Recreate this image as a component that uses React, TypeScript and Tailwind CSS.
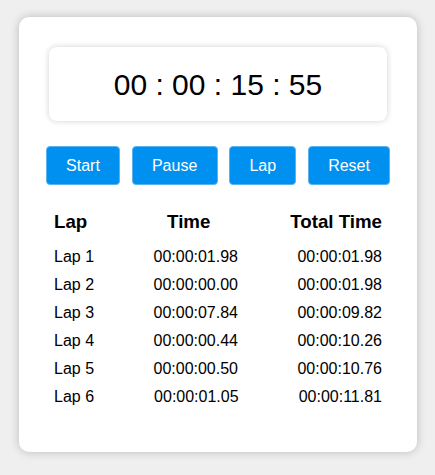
import React from "react";

const laps = [
  ["Lap 1", "00:00:01.98", "00:00:01.98"],
  ["Lap 2", "00:00:00.00", "00:00:01.98"],
  ["Lap 3", "00:00:07.84", "00:00:09.82"],
  ["Lap 4", "00:00:00.44", "00:00:10.26"],
  ["Lap 5", "00:00:00.50", "00:00:10.76"],
  ["Lap 6", "00:00:01.05", "00:00:11.81"],
];

export default function App() {
  return (
    <div
      className="min-h-[475px] w-[435px] bg-[#efefef] pt-[17px] pl-[19px] text-black"
      style={{ fontFamily: '"Liberation Sans", Arial, sans-serif' }}
    >
      <div className="flex h-[435px] w-[398px] flex-col rounded-[10px] bg-white px-[30px] pt-[30px] shadow-[0_0_10px_rgba(0,0,0,0.22)]">
        <div className="flex h-[74px] w-[338px] items-center justify-center rounded-[8px] bg-white text-[30px] shadow-[0_0_6px_rgba(0,0,0,0.18)]">
          00 : 00 : 15 : 55
        </div>
        <div className="mt-[25px] flex justify-center gap-[11.7px]">
          {["Start", "Pause", "Lap", "Reset"].map((b) => (
            <button
              key={b}
              className="h-[39px] rounded-[4px] border border-[#5ab2ee] bg-[#0090f0] px-[19.2px] text-[16px] text-white"
            >
              {b}
            </button>
          ))}
        </div>
        <div className="mt-[16px] px-[5px]">
          <div className="flex h-[42px] items-center justify-between text-[18.72px] font-bold">
            <span>Lap</span>
            <span>Time</span>
            <span>Total Time</span>
          </div>
          {laps.map((r) => (
            <div key={r[0]} className="flex h-[28px] items-center justify-between text-[16px]">
              <span>{r[0]}</span>
              <span>{r[1]}</span>
              <span>{r[2]}</span>
            </div>
          ))}
        </div>
      </div>
    </div>
  );
}
